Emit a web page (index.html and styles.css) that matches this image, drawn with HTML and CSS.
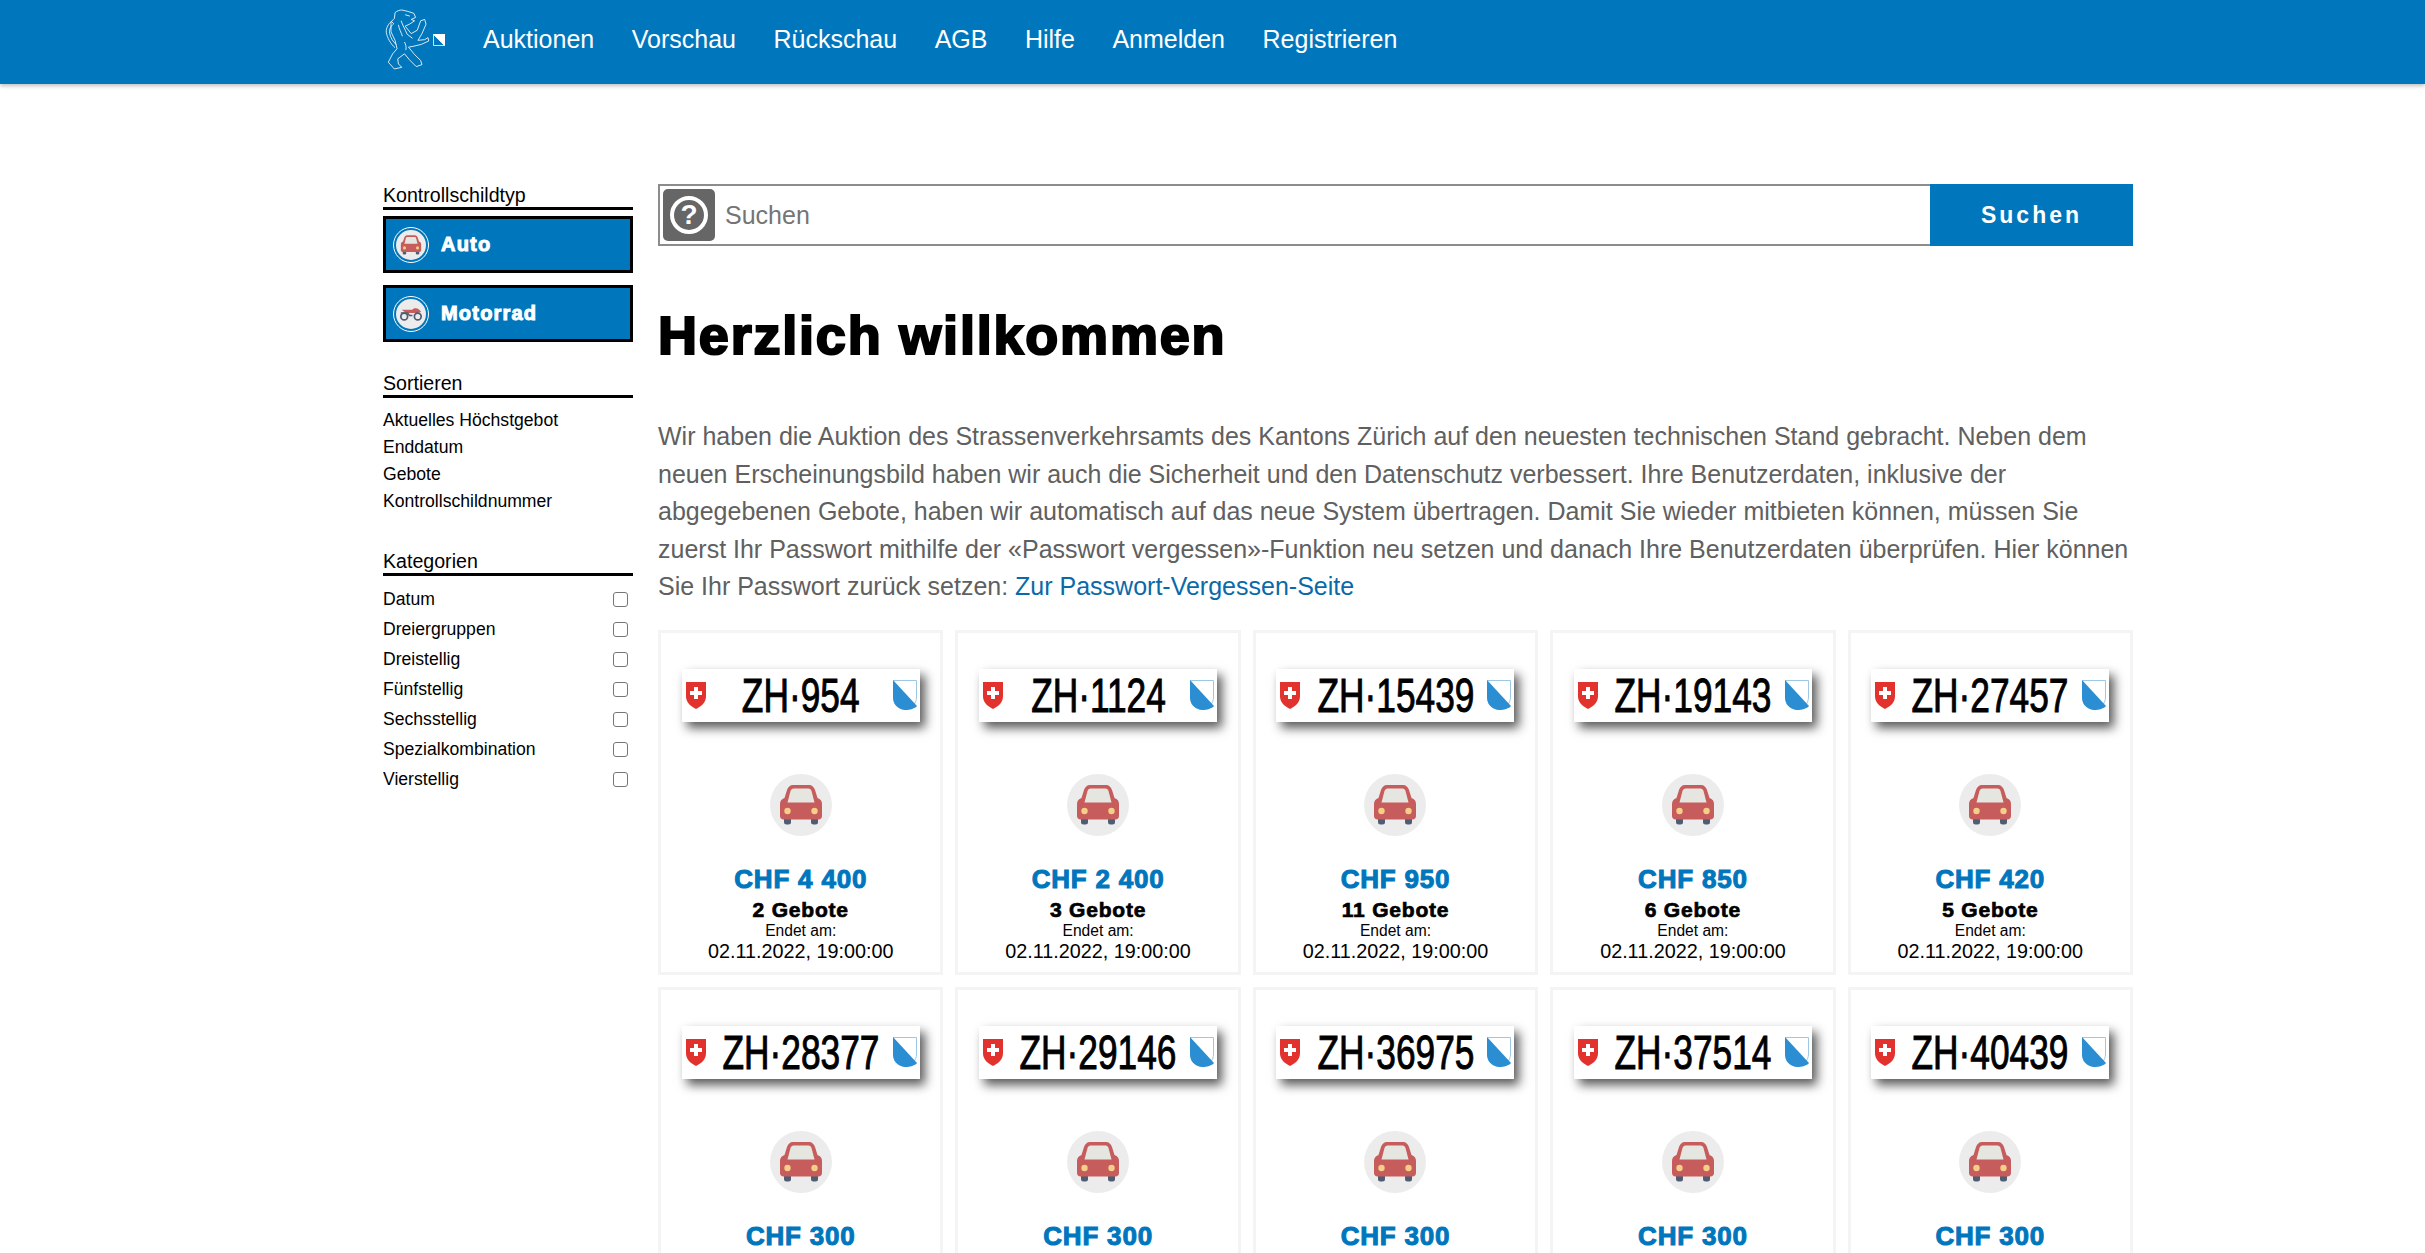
FILE: index.html
```html
<!DOCTYPE html>
<html lang="de">
<head>
  <meta charset="UTF-8">
  <meta name="viewport" content="width=device-width, initial-scale=1.0">
  <link rel="stylesheet" href="styles.css">
  <title>Auktion Kontrollschilder</title>
</head>
<body>
  <svg class="sprites" width="0" height="0">
    <symbol id="car" viewBox="0 0 62 62">
      <circle cx="31" cy="31" r="31" fill="#ececec"/>
      <rect x="14" y="43" width="7" height="7.500" rx="2.5" fill="#4f5d73"/>
      <rect x="41" y="43" width="7" height="7.500" rx="2.5" fill="#4f5d73"/>
      <path d="M23 11h16c3 0 5 2 6 5l2.500 8c3 1 4.500 3 4.500 6v12c0 2-1.500 3.500-3.500 3.500H13.500c-2 0-3.500-1.500-3.500-3.500V30c0-3 1.500-5 4.500-6l2.500-8c1-3 3-5 6-5z" fill="#c75c5c"/>
      <path d="M23.500 14.500h15c1.500 0 2.500 1 3 2.500l3 11.500H17.500l3-11.500c.5-1.500 1.500-2.500 3-2.500z" fill="#e6e6e0"/>
      <circle cx="17.500" cy="37" r="3.200" fill="#f5cf87"/>
      <circle cx="44.500" cy="37" r="3.200" fill="#f5cf87"/>
    </symbol>
    <symbol id="bike" viewBox="0 0 62 62">
      <circle cx="31" cy="31" r="31" fill="#ececec"/>
      <path d="M12 22h22c3-4 9-4 14 0l4 5-8 2H26c-5 0-10-3-14-7z" fill="#c75c5c"/>
      <circle cx="17" cy="36" r="7" fill="none" stroke="#4f5d73" stroke-width="3.500"/>
      <circle cx="45" cy="36" r="7" fill="none" stroke="#4f5d73" stroke-width="3.500"/>
      <path d="M10 29h14l4 5h6" fill="none" stroke="#4f5d73" stroke-width="3"/>
    </symbol>
    <symbol id="ch" viewBox="0 0 20 27">
      <path d="M0 0h20v14c0 6-4 10-10 13C4 24 0 20 0 14z" fill="#e2322d"/>
      <path d="M8 5h4v4h4v4h-4v4H8v-4H4V9h4z" fill="#fff"/>
    </symbol>
    <symbol id="zh" viewBox="0 0 24 30">
      <path d="M.5.500h23V17c0 7-5 11.500-11.500 12.500C5 28.500.5 24 .5 17z" fill="#fff" stroke="#9cc8e6"/>
      <path d="M0 0l24 26c-2 2.500-7 4-12 4C4 29 0 24 0 17z" fill="#2b8ed2"/>
    </symbol>
  </svg>

  <header class="topbar">
    <a class="logo" href="#">
      <svg class="lion" viewBox="10 24 135 190" fill="none" stroke="#fff" stroke-width="2.500" stroke-linejoin="round">
        <path d="M42 38c6-6 14-8 20-8l18 4 18 6 5 12-13 6 10 4-15 10-13 6 18 22 18-10 10-28 12-4 4 14-12 28-12 20 20-2 10-6 2 10-22 10-25 6-13 2 16 20 20 20 4 12-17 6-20-20-15-18-20 15 2 15 10 10-22 5-18-20 13-25 13-15-6-25-12-25v-30l10-10z"/>
        <path d="M42 142c-12-10-24-30-26-46-1-12 6-26 16-32l6 7c-8 6-14 16-12 28 2 12 10 26 20 34"/>
        <path d="M60 62c4 12 12 26 18 40l16 12M52 74c2 12 8 22 12 34M72 44l14 4M70 125c4 8 6 14 4 24"/>
      </svg>
      <svg class="mini-shield" viewBox="0 0 12 12">
        <path d="M.5.500v11h11z" fill="none" stroke="#fff" stroke-width=".8"/>
        <path d="M12 0v12L0 0z" fill="#fff"/>
      </svg>
    </a>
    <nav class="nav">
      <a href="#">Auktionen</a>
      <a href="#">Vorschau</a>
      <a href="#">Rückschau</a>
      <a href="#">AGB</a>
      <a href="#">Hilfe</a>
      <a href="#">Anmelden</a>
      <a href="#">Registrieren</a>
    </nav>
  </header>

  <div class="page">
    <aside class="sidebar">
      <h3 class="side-title">Kontrollschildtyp</h3>
      <a class="type-button" href="#">
        <span class="type-icon"><svg><use href="#car"/></svg></span>
        Auto
      </a>
      <a class="type-button" href="#">
        <span class="type-icon"><svg><use href="#bike"/></svg></span>
        Motorrad
      </a>

      <h3 class="side-title sort-title">Sortieren</h3>
      <ul class="sort-list">
        <li>Aktuelles Höchstgebot</li>
        <li>Enddatum</li>
        <li>Gebote</li>
        <li>Kontrollschildnummer</li>
      </ul>

      <h3 class="side-title cat-title">Kategorien</h3>
      <ul class="cat-list">
        <li>Datum <input type="checkbox"></li>
        <li>Dreiergruppen <input type="checkbox"></li>
        <li>Dreistellig <input type="checkbox"></li>
        <li>Fünfstellig <input type="checkbox"></li>
        <li>Sechsstellig <input type="checkbox"></li>
        <li>Spezialkombination <input type="checkbox"></li>
        <li>Vierstellig <input type="checkbox"></li>
      </ul>
    </aside>

    <main class="content">
      <div class="search">
        <div class="search-box">
          <span class="help"><span class="help-ring">?</span></span>
          <input type="text" placeholder="Suchen">
        </div>
        <button class="search-button">Suchen</button>
      </div>

      <h1>Herzlich willkommen</h1>

      <p class="intro">Wir haben die Auktion des Strassenverkehrsamts des Kantons Zürich auf den neuesten technischen Stand gebracht. Neben dem neuen Erscheinungsbild haben wir auch die Sicherheit und den Datenschutz verbessert. Ihre Benutzerdaten, inklusive der abgegebenen Gebote, haben wir automatisch auf das neue System übertragen. Damit Sie wieder mitbieten können, müssen Sie zuerst Ihr Passwort mithilfe der «Passwort vergessen»-Funktion neu setzen und danach Ihre Benutzerdaten überprüfen. Hier können Sie Ihr Passwort zurück setzen: <a href="#">Zur Passwort-Vergessen-Seite</a></p>

      <div class="cards">
        <article class="card">
          <div class="plate"><svg class="flag-ch"><use href="#ch"/></svg><span class="plate-no">ZH·954</span><svg class="flag-zh"><use href="#zh"/></svg></div>
          <svg class="car"><use href="#car"/></svg>
          <div class="price">CHF 4 400</div>
          <div class="bids">2 Gebote</div>
          <div class="ends">Endet am:</div>
          <div class="date">02.11.2022, 19:00:00</div>
        </article>
        <article class="card">
          <div class="plate"><svg class="flag-ch"><use href="#ch"/></svg><span class="plate-no">ZH·1124</span><svg class="flag-zh"><use href="#zh"/></svg></div>
          <svg class="car"><use href="#car"/></svg>
          <div class="price">CHF 2 400</div>
          <div class="bids">3 Gebote</div>
          <div class="ends">Endet am:</div>
          <div class="date">02.11.2022, 19:00:00</div>
        </article>
        <article class="card">
          <div class="plate"><svg class="flag-ch"><use href="#ch"/></svg><span class="plate-no">ZH·15439</span><svg class="flag-zh"><use href="#zh"/></svg></div>
          <svg class="car"><use href="#car"/></svg>
          <div class="price">CHF 950</div>
          <div class="bids">11 Gebote</div>
          <div class="ends">Endet am:</div>
          <div class="date">02.11.2022, 19:00:00</div>
        </article>
        <article class="card">
          <div class="plate"><svg class="flag-ch"><use href="#ch"/></svg><span class="plate-no">ZH·19143</span><svg class="flag-zh"><use href="#zh"/></svg></div>
          <svg class="car"><use href="#car"/></svg>
          <div class="price">CHF 850</div>
          <div class="bids">6 Gebote</div>
          <div class="ends">Endet am:</div>
          <div class="date">02.11.2022, 19:00:00</div>
        </article>
        <article class="card">
          <div class="plate"><svg class="flag-ch"><use href="#ch"/></svg><span class="plate-no">ZH·27457</span><svg class="flag-zh"><use href="#zh"/></svg></div>
          <svg class="car"><use href="#car"/></svg>
          <div class="price">CHF 420</div>
          <div class="bids">5 Gebote</div>
          <div class="ends">Endet am:</div>
          <div class="date">02.11.2022, 19:00:00</div>
        </article>
        <article class="card">
          <div class="plate"><svg class="flag-ch"><use href="#ch"/></svg><span class="plate-no">ZH·28377</span><svg class="flag-zh"><use href="#zh"/></svg></div>
          <svg class="car"><use href="#car"/></svg>
          <div class="price">CHF 300</div>
        </article>
        <article class="card">
          <div class="plate"><svg class="flag-ch"><use href="#ch"/></svg><span class="plate-no">ZH·29146</span><svg class="flag-zh"><use href="#zh"/></svg></div>
          <svg class="car"><use href="#car"/></svg>
          <div class="price">CHF 300</div>
        </article>
        <article class="card">
          <div class="plate"><svg class="flag-ch"><use href="#ch"/></svg><span class="plate-no">ZH·36975</span><svg class="flag-zh"><use href="#zh"/></svg></div>
          <svg class="car"><use href="#car"/></svg>
          <div class="price">CHF 300</div>
        </article>
        <article class="card">
          <div class="plate"><svg class="flag-ch"><use href="#ch"/></svg><span class="plate-no">ZH·37514</span><svg class="flag-zh"><use href="#zh"/></svg></div>
          <svg class="car"><use href="#car"/></svg>
          <div class="price">CHF 300</div>
        </article>
        <article class="card">
          <div class="plate"><svg class="flag-ch"><use href="#ch"/></svg><span class="plate-no">ZH·40439</span><svg class="flag-zh"><use href="#zh"/></svg></div>
          <svg class="car"><use href="#car"/></svg>
          <div class="price">CHF 300</div>
        </article>
      </div>
    </main>
  </div>
</body>
</html>
```

FILE: styles.css
```css
html, body {
  height: 100%;
  overflow: hidden;
}

body {
  font-family: "Liberation Sans", Arial, sans-serif;
  background-color: white;
  color: black;
  margin: 0;
}

a {
  text-decoration: none;
  color: inherit;
}

ul {
  list-style: none;
  margin: 0;
  padding: 0;
}

.sprites {
  position: absolute;
}

.topbar {
  display: flex;
  align-items: center;
  height: 84px;
  padding-left: 383px;
  background-color: #0076bd;
  box-shadow: 0 2px 4px rgba(0, 0, 0, 0.25);
}

.logo {
  display: flex;
  align-items: flex-start;
  width: 100px;
  margin-bottom: 4px;
}

.lion {
  width: 48px;
  height: 64px;
}

.mini-shield {
  width: 12px;
  height: 12px;
  margin: 26px 0 0 2px;
}

.nav {
  display: flex;
  gap: 37.5px;
  margin-bottom: 6px;
}

.nav a {
  color: white;
  font-size: 25px;
}

.page {
  display: flex;
  gap: 25px;
  width: 1750px;
  margin-left: 383px;
  padding-top: 100px;
}

.sidebar {
  flex: 0 0 250px;
}

.side-title {
  margin: 0;
  padding-top: 0;
  font-size: 19.6px;
  font-weight: normal;
  line-height: 22px;
  padding-bottom: 1px;
  border-bottom: 3px solid black;
}

.type-button {
  display: flex;
  align-items: center;
  gap: 12px;
  height: 57px;
  box-sizing: border-box;
  margin-top: 6px;
  padding-left: 7px;
  background-color: #0076bd;
  border: 3px solid black;
  color: white;
  font-size: 20px;
  font-weight: bold;
  -webkit-text-stroke: 1px white;
  letter-spacing: 1.2px;
}

.type-button + .type-button {
  margin-top: 12px;
}

.type-icon {
  display: block;
  width: 36px;
  height: 36px;
  box-sizing: border-box;
  padding: 2px;
  border: 1.5px solid white;
  border-radius: 50%;
}

.type-icon svg {
  display: block;
  width: 100%;
  height: 100%;
}

.sort-title {
  margin-top: 30px;
}

.sort-list {
  margin-top: 9px;
}

.sort-list li {
  font-size: 17.6px;
  line-height: 27px;
}

.cat-title {
  margin-top: 35px;
}

.cat-list {
  margin-top: 8px;
}

.cat-list li {
  display: flex;
  justify-content: space-between;
  align-items: center;
  height: 30px;
  padding-right: 5px;
  font-size: 17.6px;
}

.cat-list input {
  appearance: none;
  width: 15px;
  height: 15px;
  margin: 0;
  background-color: white;
  border: 1.5px solid #767676;
  border-radius: 3px;
}

.content {
  flex: 1;
  min-width: 0;
}

.search {
  display: flex;
  height: 62px;
}

.search-box {
  flex: 1;
  display: flex;
  align-items: center;
  gap: 10px;
  padding-left: 3px;
  background-color: white;
  border: 2px solid #8c8c8c;
  border-right: none;
}

.search-box input {
  flex: 1;
  border: none;
  outline: none;
  font-family: inherit;
  font-size: 25px;
  padding: 0;
}

.search-box input::placeholder {
  color: #757575;
}

.help {
  display: flex;
  align-items: center;
  justify-content: center;
  width: 52px;
  height: 52px;
  background-color: #666;
  border-radius: 5px;
}

.help-ring {
  width: 38px;
  height: 38px;
  box-sizing: border-box;
  border: 4px solid white;
  border-radius: 50%;
  color: white;
  font-size: 28px;
  font-weight: bold;
  line-height: 30px;
  text-align: center;
}

.search-button {
  width: 203px;
  background-color: #0076bd;
  border: none;
  color: white;
  font-family: inherit;
  font-size: 23px;
  font-weight: bold;
  letter-spacing: 3px;
  cursor: pointer;
}

h1 {
  margin: 59px 0 53px;
  font-size: 54px;
  font-weight: bold;
  line-height: 60px;
  letter-spacing: 1.8px;
  -webkit-text-stroke: 2.2px black;
}

.intro {
  margin: 0 0 24px;
  color: #606060;
  font-size: 25px;
  line-height: 37.6px;
}

.intro a {
  color: #0a6aa8;
}

.cards {
  display: grid;
  grid-template-columns: repeat(5, 1fr);
  gap: 12px;
}

.card {
  display: flex;
  flex-direction: column;
  align-items: center;
  height: 345px;
  box-sizing: border-box;
  padding-top: 36px;
  border: 3px solid #f4f4f4;
  text-align: center;
}

.plate {
  position: relative;
  display: flex;
  align-items: center;
  justify-content: center;
  width: 238px;
  height: 53px;
  flex: none;
  background-color: white;
  box-shadow: 5px 6px 10px rgba(0, 0, 0, 0.65);
}

.flag-ch {
  position: absolute;
  left: 4px;
  top: 13px;
  width: 20px;
  height: 27px;
}

.flag-zh {
  position: absolute;
  right: 3px;
  top: 11px;
  width: 24px;
  height: 30px;
}

.plate-no {
  display: inline-block;
  font-size: 49px;
  line-height: 53px;
  white-space: nowrap;
  transform: scaleX(0.72);
  -webkit-text-stroke: 1px black;
}

.car {
  flex: none;
  width: 62px;
  height: 62px;
  margin-top: 52px;
}

.price {
  margin-top: 29px;
  color: #0076bd;
  font-size: 26px;
  font-weight: bold;
  line-height: 28px;
  letter-spacing: 0.8px;
  -webkit-text-stroke: 1px #0076bd;
}

.bids {
  margin-top: 5px;
  font-size: 21px;
  font-weight: bold;
  line-height: 24px;
  letter-spacing: 0.8px;
  -webkit-text-stroke: 0.7px black;
}

.ends {
  font-size: 15.6px;
  line-height: 18px;
}

.date {
  font-size: 19.8px;
  line-height: 22px;
}
```
